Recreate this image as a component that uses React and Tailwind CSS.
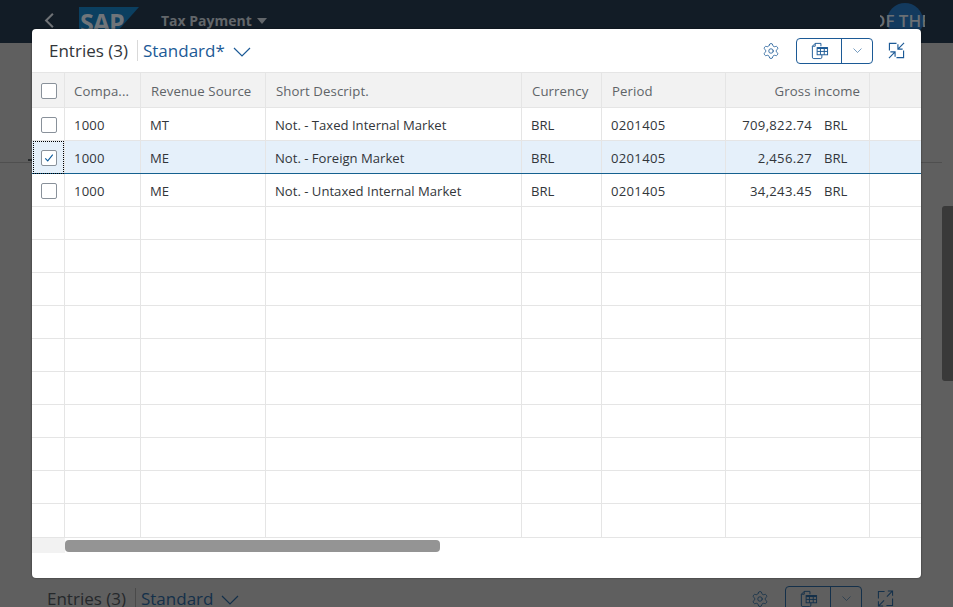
import React from "react";
import { Settings } from "lucide-react";

const rows = [
  { company: "1000", source: "MT", text: "Not. - Taxed Internal Market", amount: "709,822.74" },
  { company: "1000", source: "ME", text: "Not. - Foreign Market", amount: "2,456.27", selected: true },
  { company: "1000", source: "ME", text: "Not. - Untaxed Internal Market", amount: "34,243.45" },
];

const emptyRows = Array.from({ length: 10 });
const gridCols = "grid grid-cols-[33px_76px_125px_256px_80px_124px_144px_1fr]";
const cell = "border-r border-[#e5e5e5] flex items-center pt-[4px]";
const boxCell = "border-r border-[#e5e5e5] flex items-center justify-center pt-[2px] pl-[1px]";

function Chevron({ className }) {
  return (
    <svg viewBox="0 0 18 10" className={className} fill="none" stroke="currentColor" strokeWidth="1.2">
      <path d="M1 1l8 8 8-8" />
    </svg>
  );
}

function ExportIcon({ className }) {
  return (
    <svg viewBox="0 0 20 20" className={className} fill="none" stroke="currentColor" strokeWidth="1">
      <path d="M11.5 5.5V2.5H5.5L2.5 5.5V17a1.5 1.5 0 0 0 1.5 1.5h7a1.5 1.5 0 0 0 1.5-1.5V14.5" />
      <path d="M5.5 2.5v3h-3" />
      <rect x="7.5" y="7" width="11" height="7.5" />
      <path d="M7.5 7.5h11" strokeWidth="2" />
      <path d="M7.5 11h11M11 7v7.5M15 7v7.5" />
    </svg>
  );
}

function CollapseIcon({ className }) {
  return (
    <svg viewBox="0 0 18 18" className={className} fill="none" stroke="currentColor" strokeWidth="1.2">
      <path d="M9 1.5H1.5V9M9 16.5h7.5V9" />
      <path d="M17 1L10.5 7.5M10.5 2.5v5h5M1 17l6.5-6.5M2.5 10.5h5v5" />
    </svg>
  );
}

function ExpandIcon({ className }) {
  return (
    <svg viewBox="0 0 18 18" className={className} fill="none" stroke="currentColor" strokeWidth="1.1">
      <path d="M8 1.5H1.5V9M10 16.5h6.5V9" />
      <path d="M10.5 7L16.5 1M11.5 1h5v5M7.5 11L1.5 17M1.5 12v5h5" />
    </svg>
  );
}

function Checkbox({ checked }) {
  return (
    <div className="w-[16px] h-[16px] rounded-[2px] border border-[#89919a] bg-white flex items-center justify-center">
      {checked && (
        <svg viewBox="0 0 12 12" className="w-[10px] h-[10px] text-[#0a5a9c]" fill="none" stroke="currentColor" strokeWidth="1.3">
          <path d="M1.5 6.5l3 3 6-7.5" />
        </svg>
      )}
    </div>
  );
}

function Toolbar({ title, variant, dim, pin }) {
  const blue = dim ? "text-[#14304a]" : "text-[#1c5a96]";
  const line = dim ? "border-[#14304a]" : "border-[#1c5a96]";
  return (
    <div className={`h-[43px] flex items-center shrink-0 ${pin}`}>
      <span className={`text-[17px] ${dim ? "text-[#25282b]" : "text-[#32363a]"}`}>{title}</span>
      <div className={`w-px h-[21px] ml-[9px] mr-[5px] ${dim ? "bg-[#4a4a4a]" : "bg-[#d9d9d9]"}`}></div>
      <span className={`text-[17px] ${blue}`}>{variant}</span>
      <Chevron className={`w-[18px] h-[10px] ml-[8px] mt-[3px] ${blue}`} />
      <div className="flex-1"></div>
      <Settings size={18} strokeWidth={1.1} className={blue} />
      <div className={`ml-[16px] h-[26px] w-[77px] flex rounded-[4px] border ${line}`}>
        <div className={`w-[45px] flex items-center justify-center border-r ${line} ${blue}`}>
          <ExportIcon className="w-[19px] h-[19px]" />
        </div>
        <div className={`flex-1 flex items-center justify-center ${blue}`}>
          <Chevron className="w-[9px] h-[5px]" />
        </div>
      </div>
      <div className={`ml-[15px] ${blue}`}>
        {dim ? <ExpandIcon className="w-[17px] h-[17px]" /> : <CollapseIcon className="w-[17px] h-[17px]" />}
      </div>
    </div>
  );
}

function Row({ row, last }) {
  const rowBg = row && row.selected ? "bg-[#e5f0fa] border-b-[#15608f]" : "border-b-[#e5e5e5]";
  const height = last ? "h-[34px]" : "h-[33px]";
  return (
    <div className={`${gridCols} ${height} border-b text-[13.1px] text-[#32363a] ${rowBg}`}>
      <div className={`${boxCell} relative`}>
        {row && <Checkbox checked={row.selected} />}
        {row && row.selected && (
          <div className="absolute left-[1px] right-0 top-0 bottom-[-1px] border border-dotted border-black"></div>
        )}
      </div>
      <div className={`${cell} pl-[9px] tracking-[0.2px]`}>{row && row.company}</div>
      <div className={`${cell} pl-[9px]`}>{row && row.source}</div>
      <div className={`${cell} pl-[9px]`}>{row && row.text}</div>
      <div className={`${cell} pl-[9px]`}>{row && "BRL"}</div>
      <div className={`${cell} pl-[9px] tracking-[0.3px]`}>{row && "0201405"}</div>
      <div className={`${cell} justify-end pr-[20px]`}>
        {row && (
          <>
            <span className="tracking-[0.3px]">{row.amount}</span>
            <span className="ml-[12px] w-[25px]">BRL</span>
          </>
        )}
      </div>
      <div></div>
    </div>
  );
}

export default function App() {
  return (
    <div
      className="relative w-[953px] h-[607px] overflow-hidden flex flex-col bg-[#5f5f5f]"
      style={{ fontFamily: '"Open Sans", "Noto Sans", sans-serif' }}
    >
      {/* dimmed shell bar */}
      <div className="h-[43px] shrink-0 bg-[#121c26] flex items-center relative">
        <svg viewBox="0 0 12 20" className="ml-[44px] w-[11px] h-[17px] mt-[-2px] text-[#6f7276]" fill="none" stroke="currentColor" strokeWidth="2.4">
          <path d="M10 2L2 10l8 8" />
        </svg>
        <div className="relative ml-[24px] w-[60px] h-[36px] self-end overflow-hidden">
          <svg viewBox="0 0 60 36" className="w-[60px] h-[36px]">
            <polygon points="0,0 60,0 28,36 0,36" fill="#0b3f60" />
          </svg>
          <span className="absolute left-[1px] top-[-3px] text-[25px] font-bold text-[#70757a] tracking-[-1px] leading-[36px]">SAP</span>
        </div>
        <span className="ml-[22px] text-[14px] font-bold text-[#62666a] mt-[-2px]">Tax Payment</span>
        <span className="ml-[5px] mt-[-2px] w-0 h-0 border-x-[5px] border-x-transparent border-t-[6px] border-t-[#62666a]"></span>
        <div className="absolute left-[887px] top-[3px] w-[36px] h-[36px] rounded-full bg-[#133a5e]"></div>
        <div className="absolute left-[880px] top-[8px] w-[45px] overflow-hidden whitespace-nowrap">
          <span className="block ml-[-8px] text-[17px] font-semibold text-[#6a6f74]">OF THE</span>
        </div>
      </div>

      {/* dimmed page */}
      <div className="h-[120px] shrink-0 border-b border-[#4f4f4f] mr-[11px]"></div>
      <div className="flex-1"></div>
      <Toolbar title="Entries (3)" variant="Standard" dim pin="pl-[47px] pr-[59px] mb-[-13px]" />
      <div className="absolute right-0 top-[206px] w-[11px] h-[175px] rounded-l-[3px] bg-[#393939]"></div>
      <div className="absolute left-[28px] top-[159px] w-[4px] h-[2px] bg-[#26292b]"></div>

      {/* dialog */}
      <div className="absolute left-[32px] top-[29px] w-[889px] h-[549px] bg-white rounded-[4px] flex flex-col overflow-hidden shadow-[0_0_2px_rgba(0,0,0,0.6)]">
        <Toolbar title="Entries (3)" variant="Standard*" pin="pl-[17px] pr-[16px]" />
        <div className={`${gridCols} h-[36px] bg-[#f2f2f2] border-y border-[#e5e5e5] text-[13.2px] tracking-[0.1px] text-[#5f6468]`}>
          <div className={boxCell}><Checkbox /></div>
          <div className={`${cell} pl-[9px]`}>Compa...</div>
          <div className={`${cell} pl-[10px]`}>Revenue Source</div>
          <div className={`${cell} pl-[10px]`}>Short Descript.</div>
          <div className={`${cell} pl-[10px]`}>Currency</div>
          <div className={`${cell} pl-[10px]`}>Period</div>
          <div className={`${cell} justify-end pr-[9px]`}>Gross income</div>
          <div></div>
        </div>
        {rows.map((row, i) => (
          <Row key={i} row={row} />
        ))}
        {emptyRows.map((_, i) => (
          <Row key={i} last={i === emptyRows.length - 1} />
        ))}
        <div className="h-[15px] shrink-0 flex">
          <div className="w-[33px] bg-[#f2f2f2]"></div>
          <div className="w-[375px] h-[12px] mt-[2px] rounded-[4px] bg-[#949494]"></div>
        </div>
      </div>
    </div>
  );
}
